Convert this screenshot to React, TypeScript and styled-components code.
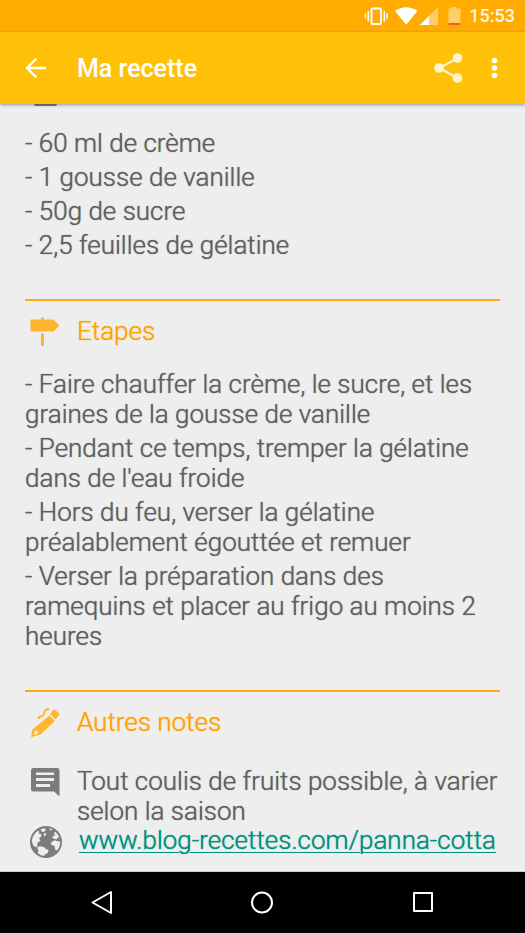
import React from 'react';
import styled, { createGlobalStyle } from 'styled-components';

const GlobalStyle = createGlobalStyle`
  *, *::before, *::after { box-sizing: border-box; }
  body { margin: 0; background: #eeeeee; font-family: Roboto, sans-serif; color: #606060; }
  h1, h2, p, ul { margin: 0; padding: 0; }
  svg { display: block; flex: none; }
`;

const Screen = styled.div`
  min-height: 100vh;
  display: flex;
  flex-direction: column;
  background: #eeeeee;
`;

const StatusBar = styled.div`
  display: flex;
  align-items: center;
  justify-content: flex-end;
  height: 32px;
  padding-right: 10px;
  background: #ffab00;
  color: #ffffff;
`;

const Clock = styled.time`
  margin-left: 8px;
  font-size: 18px;
  line-height: 32px;
  font-weight: 500;
  color: #fff6e0;
`;

const AppBar = styled.header`
  display: flex;
  align-items: center;
  height: 72px;
  padding: 0 15px 0 20px;
  background: #ffc107;
  box-shadow: 0 1px 3px rgba(60, 60, 110, 0.5);
  z-index: 1;
`;

const Title = styled.h1`
  flex: 1;
  margin-left: 25px;
  padding-top: 2px;
  font-size: 25px;
  line-height: 32px;
  font-weight: 500;
  color: #ffffff;
`;

const IconButton = styled.button`
  display: flex;
  align-items: center;
  justify-content: center;
  height: 32px;
  min-width: 32px;
  padding: 0;
  border: 0;
  background: none;
  color: #ffffff;
`;

const Actions = styled.div`
  display: flex;
  align-items: center;
  gap: 14px;
`;

const Content = styled.main`
  flex: 1;
  padding: 0 25px;
  border-bottom: 1px solid #c8cccc;
  font-size: 26px;
  line-height: 30px;
  font-weight: 300;
  text-shadow: 0 0 1px currentColor;
`;

const ScrolledIcon = styled.div`
  display: flex;
  align-items: flex-end;
  height: 2px;
  margin: 0 0 22px 5px;
  overflow: hidden;
`;

const Section = styled.section`
  margin-top: 39px;
  border-top: 2px solid #ffab16;
`;

const SectionHeader = styled.div`
  display: flex;
  align-items: center;
  gap: 17px;
  padding: 15px 0 0 5px;
`;

const SectionTitle = styled.h2`
  font-size: 26px;
  line-height: 30px;
  font-weight: 300;
  color: #ffa200;
`;

const Lines = styled.ul<{ $top?: number }>`
  display: flex;
  flex-direction: column;
  gap: 4px;
  margin-top: ${({ $top = 0 }) => $top}px;
  list-style: none;
`;

const Notes = styled.div`
  margin-top: 29px;
  padding-left: 5px;
`;

const Note = styled.div`
  display: flex;
  align-items: flex-start;
  gap: 17px;
  margin-right: -25px;
  color: #7c7c7c;
`;

const NoteText = styled.p`
  color: #606060;
`;

const NoteLink = styled.a`
  color: #009080;
  line-height: 28px;
  text-decoration: underline;
  text-decoration-thickness: 1px;
  text-underline-offset: 3px;
`;

const NavBar = styled.nav`
  display: flex;
  align-items: center;
  justify-content: space-around;
  height: 61px;
  padding: 0 22px;
  background: #000000;
`;

const ingredients = ['60 ml de crème', '1 gousse de vanille', '50g de sucre', '2,5 feuilles de gélatine'];

const steps = [
  'Faire chauffer la crème, le sucre, et les graines de la gousse de vanille',
  "Pendant ce temps, tremper la gélatine dans de l'eau froide",
  'Hors du feu, verser la gélatine préalablement égouttée et remuer',
  'Verser la préparation dans des ramequins et placer au frigo au moins 2 heures',
];

const StatusIcons = () => (
  <svg width="100" height="32" viewBox="360 0 100 32" aria-hidden="true">
    <rect x="370.500" y="8.6" width="9.5" height="15.4" rx="1" fill="none" stroke="#fff" strokeWidth="2" />
    <path d="M367.2 11v10.500M364.5 13.3v5.500M383.3 11v10.500M386 13.3v5.500" stroke="#fff" strokeWidth="1.5" />
    <path d="M394 11Q405 3.500 416.500 11L405.200 24.800Z" fill="#fff" />
    <path d="M437 7V25H419Z" fill="#ffce69" />
    <path d="M428 16v9h-9Z" fill="#fff" />
    <path d="M450.500 7h5v1.500h4V25h-12V8.500h3Z" fill="#ffce69" />
    <path d="M447.500 23h12v2h-12Z" fill="#ff5722" />
  </svg>
);

const BackArrow = () => (
  <svg width="32" height="32" viewBox="0 0 32 32" fill="none" stroke="currentColor" strokeWidth="2.400" aria-hidden="true">
    <path d="M26 16H8M16.300 6.600 7 16l9.300 9.400" />
  </svg>
);

const ShareIcon = () => (
  <svg width="32" height="32" viewBox="0 0 32 32" fill="#fff3cd" aria-hidden="true">
    <path d="M25.500 6.500 7 16l18.500 10" fill="none" stroke="#fff3cd" strokeWidth="2.200" />
    <circle cx="25.500" cy="6" r="4.800" />
    <circle cx="7" cy="16" r="4.800" />
    <circle cx="25.500" cy="26" r="4.800" />
  </svg>
);

const MoreIcon = () => (
  <svg width="32" height="32" viewBox="0 0 32 32" fill="currentColor" aria-hidden="true">
    <circle cx="16.500" cy="8.500" r="2.700" />
    <circle cx="16.500" cy="16" r="2.700" />
    <circle cx="16.500" cy="23.500" r="2.700" />
  </svg>
);

const SignpostIcon = () => (
  <svg width="30" height="30" viewBox="0 0 30 30" fill="#ffb62e" aria-hidden="true">
    <path d="M11 1.500h3v2h9.500l6 6-6 6H.5v-12H11ZM11 17.500h3V30h-3Z" />
  </svg>
);

const PenIcon = () => (
  <svg width="30" height="30" viewBox="0 0 30 30" fill="#ffb62e" aria-hidden="true">
    <path fillRule="evenodd" d="M19.500 8.500 25 14 10.500 27.500 1 30.300 2.200 22.800ZM4.500 24.500l-.5 3.500 3.200-1 1.300-1.500-1.800-2Z" />
    <path d="m20 7 4-5 5.800 5-4.300 5.500Z" />
    <path d="M19.500 2.200c-5-.5-4.500 2-5.500 4.800s-3.500 1.800-5.200 3.800" fill="none" stroke="#ffb62e" strokeWidth="2" />
    <circle cx="9" cy="10.500" r="1.400" />
  </svg>
);

const CommentIcon = () => (
  <svg width="30" height="30" viewBox="0 0 30 30" fill="currentColor" aria-hidden="true">
    <path fillRule="evenodd" d="M3 2h24.500q2 0 2 2.500V30.500L24 25.500H3.500Q1 25.500 1 23V4.500Q1 2 3 2ZM6 6.500v2.500h18V6.500Zm0 5.500v3h18v-3ZM6 18v3h14v-3Z" />
  </svg>
);

const GlobeIcon = () => (
  <svg width="32" height="32" viewBox="0 0 32 32" fill="#eeeeee" aria-hidden="true">
    <circle cx="16" cy="16" r="16" fill="#7c7c7c" />
    <path d="M1.800 15Q2.500 9 7.500 5l2 .5-1 2 2.500.5.500 2-2.500 2.500 1.500 2-3.500 3 .5 3-2.500.5-2-2Z" />
    <path d="m10.500 3.500 3.500-1.200 2 1.200-1.500 2-2.500.5ZM13.500 8l2-1.500.5 2.500-1.500 1.500ZM18.500 2l4 1.200-1.500 1.500Z" />
    <path d="m7 21.500 3-1.200 4.500 1 1 1.500 3 1.200-.8 3-3 1.500-.5 1.600q-4-.4-6.500-3l.8-2.600Z" />
    <path d="M25 5.500q3 2.500 4.500 6l-2 .2-1 1.800-2.500-.8-2-1 1.500-2 2-.5-1.500-1.500Z" />
    <path d="m22 15.500 3-1.200 2.500 1 2.700.2q.2 5-3 9l-2.200-1-.5-3.500-3-1-.7-1.500Z" />
  </svg>
);

export default function App() {
  return (
    <Screen>
      <GlobalStyle />
      <StatusBar>
        <StatusIcons />
        <Clock>15:53</Clock>
      </StatusBar>
      <AppBar>
        <IconButton type="button" aria-label="Retour"><BackArrow /></IconButton>
        <Title>Ma recette</Title>
        <Actions>
          <IconButton type="button" aria-label="Partager"><ShareIcon /></IconButton>
          <IconButton type="button" aria-label="Plus d'options"><MoreIcon /></IconButton>
        </Actions>
      </AppBar>
      <Content>
        <ScrolledIcon>
          <svg width="30" height="30" viewBox="0 0 30 30" fill="#747078" aria-hidden="true">
            <rect x="4" y="0" width="23" height="30" rx="2" />
          </svg>
        </ScrolledIcon>
        <Lines>
          {ingredients.map((line) => <li key={line}>{`- ${line}`}</li>)}
        </Lines>
        <Section>
          <SectionHeader>
            <SignpostIcon />
            <SectionTitle>Etapes</SectionTitle>
          </SectionHeader>
          <Lines $top={23}>
            {steps.map((line) => <li key={line}>{`- ${line}`}</li>)}
          </Lines>
        </Section>
        <Section>
          <SectionHeader>
            <PenIcon />
            <SectionTitle>Autres notes</SectionTitle>
          </SectionHeader>
          <Notes>
            <Note>
              <CommentIcon />
              <NoteText>Tout coulis de fruits possible, à varier selon la saison</NoteText>
            </Note>
            <Note>
              <GlobeIcon />
              <NoteLink href="http://www.blog-recettes.com/panna-cotta">www.blog-recettes.com/panna-cotta</NoteLink>
            </Note>
          </Notes>
        </Section>
      </Content>
      <NavBar>
        <IconButton type="button" aria-label="Retour système">
          <svg width="28" height="28" viewBox="0 0 28 28" fill="none" stroke="#fff" strokeWidth="2" strokeLinejoin="round" aria-hidden="true">
            <path d="M23 3v21L4.500 13.500Z" />
          </svg>
        </IconButton>
        <IconButton type="button" aria-label="Accueil">
          <svg width="28" height="28" viewBox="0 0 28 28" fill="none" stroke="#fff" strokeWidth="2" aria-hidden="true">
            <circle cx="14" cy="13.500" r="10" />
          </svg>
        </IconButton>
        <IconButton type="button" aria-label="Applications récentes">
          <svg width="28" height="28" viewBox="0 0 28 28" fill="none" stroke="#fff" strokeWidth="2" strokeLinejoin="round" aria-hidden="true">
            <path d="M5 4h18v18H5Z" />
          </svg>
        </IconButton>
      </NavBar>
    </Screen>
  );
}
